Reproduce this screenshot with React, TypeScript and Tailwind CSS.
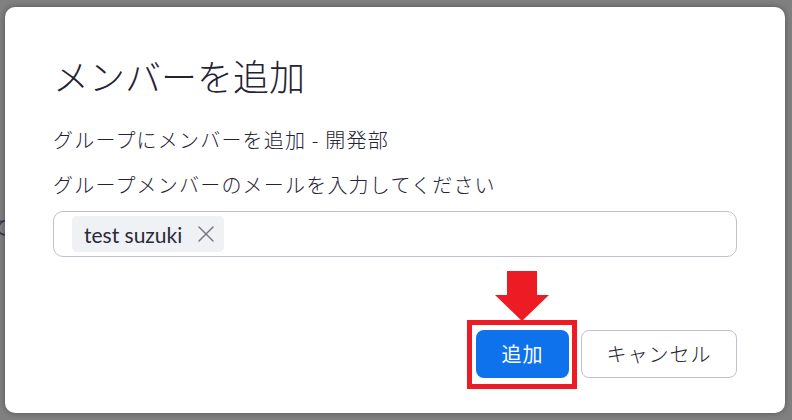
import { X } from "lucide-react";

const jp = { fontFamily: '"Noto Sans CJK JP", "Noto Sans", sans-serif' };
const latin = { fontFamily: 'Lato, "Noto Sans CJK JP", sans-serif' };

function TagChip({ label }: { label: string }) {
  return (
    <div className="flex items-center h-[36px] rounded-[5px] bg-[#f0f1f5] pl-[12px] pr-[4px] gap-[10px]">
      <span className="text-[21px] text-[#2a2a3a] leading-none" style={latin}>
        {label}
      </span>
      <X className="w-[28px] h-[28px] text-[#747487]" strokeWidth={1.2} />
    </div>
  );
}

export default function App() {
  return (
    <div className="relative w-[792px] h-[420px] bg-[#808080] overflow-hidden pl-[5px] pt-[7px]" style={jp}>
      {/* part of the page behind the dialog */}
      <span className="absolute left-[-10px] top-[212px] text-[20px] text-[#3a3a4a]">て</span>

      <div className="relative w-[780px] h-[406px] bg-white rounded-[10px] shadow-[0_0_6px_rgba(0,0,0,0.35)] px-[48px] pt-[43px]">
        <h1 className="text-[36px] font-light leading-[50px] text-[#232333]">
          メンバーを追加
        </h1>

        <p className="mt-[26px] text-[20px] font-light leading-[28px] text-[#232333] tracking-[1.2px]">
          グループにメンバーを追加 - 開発部
        </p>
        <p className="mt-[17px] text-[20px] font-light leading-[28px] text-[#232333] tracking-[1.2px]">
          グループメンバーのメールを入力してください
        </p>

        <div className="mt-[12px] h-[46px] rounded-[10px] border border-[#c1c1cd] flex items-center pl-[18px]">
          <TagChip label="test suzuki" />
        </div>

        <div className="mt-[73px] flex justify-end gap-[12px]">
          <div className="relative">
            {/* annotation arrow */}
            <svg
              className="absolute left-[19px] top-[-59px]"
              width="54"
              height="50"
              viewBox="0 0 54 50"
            >
              <path d="M12 0 H42 V24 H54 L27 50 L0 24 H12 Z" fill="#ed1c24" />
            </svg>
            {/* annotation box */}
            <div className="absolute -left-[9px] -right-[8px] -top-[10px] -bottom-[11px] border-[5px] border-[#ed1c24]" />
            <button className="w-[93px] h-[48px] rounded-[8px] bg-[#0e72ed] text-white text-[20px] tracking-[1px]">
              追加
            </button>
          </div>
          <button className="w-[156px] h-[48px] rounded-[8px] border border-[#c1c1cd] bg-white text-[#232333] text-[20px] font-light tracking-[1px]">
            キャンセル
          </button>
        </div>
      </div>
    </div>
  );
}
